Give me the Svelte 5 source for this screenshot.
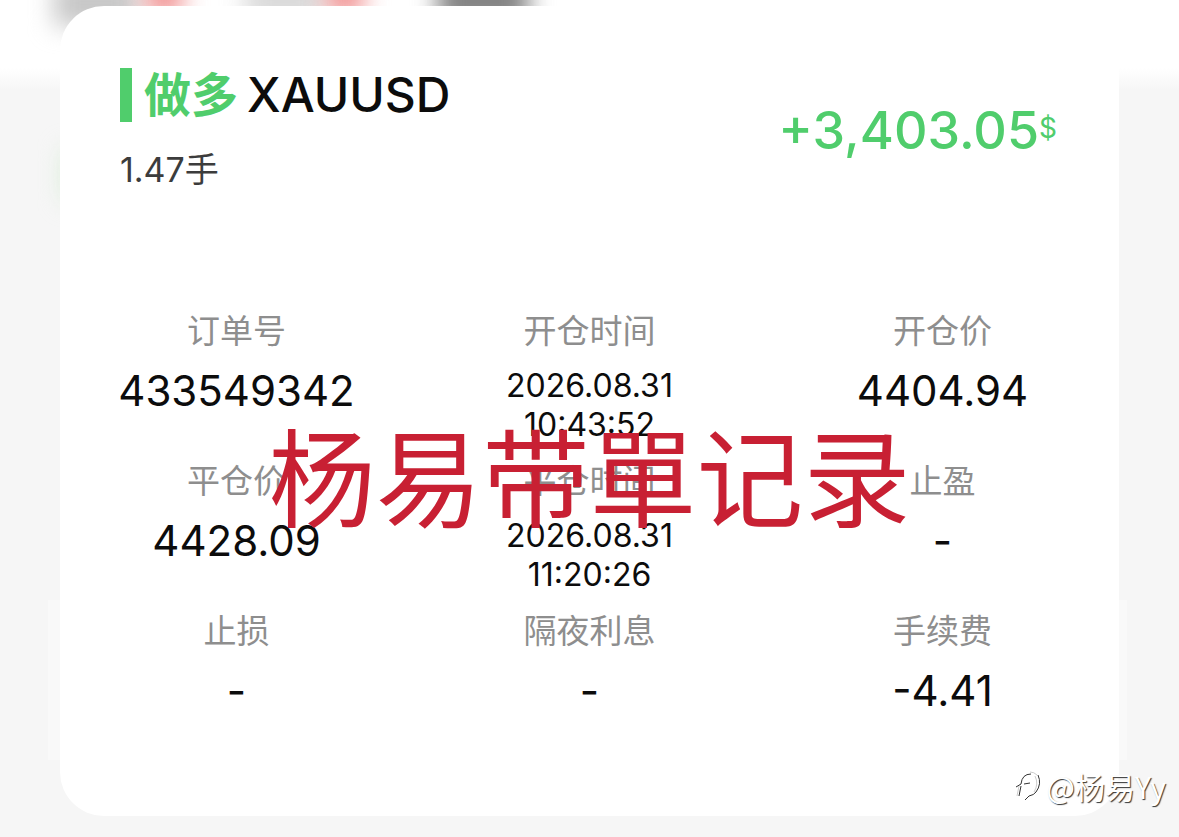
<script>
  const order = {
    side: '做多',
    symbol: 'XAUUSD',
    lots: '1.47手',
    profit: '+3,403.05',
    currency: '$'
  };

  const fields = [
    { label: '订单号', value: ['433549342'] },
    { label: '开仓时间', value: ['2026.08.31', '10:43:52'] },
    { label: '开仓价', value: ['4404.94'] },
    { label: '平仓价', value: ['4428.09'] },
    { label: '平仓时间', value: ['2026.08.31', '11:20:26'] },
    { label: '止盈', value: ['-'] },
    { label: '止损', value: ['-'] },
    { label: '隔夜利息', value: ['-'] },
    { label: '手续费', value: ['-4.41'] }
  ];
</script>

<main class="page">
  <div class="backdrop" aria-hidden="true">
    <span class="smudge grey-one"></span>
    <span class="smudge grey-two"></span>
    <span class="smudge red-one"></span>
    <span class="smudge red-two"></span>
    <span class="smudge dark"></span>
    <span class="smudge green"></span>
    <span class="strip"></span>
  </div>

  <article class="card">
    <header class="card-header">
      <div>
        <h1 class="title">
          <span class="side">{order.side}</span>
          <span class="symbol">{order.symbol}</span>
        </h1>
        <p class="lots">{order.lots}</p>
      </div>
      <p class="profit">{order.profit}<span class="currency">{order.currency}</span></p>
    </header>

    <dl class="fields">
      {#each fields as field}
        <div class="field">
          <dt>{field.label}</dt>
          <dd class:time={field.value.length > 1}>
            {#each field.value as line}
              <span class="line">{line}</span>
            {/each}
          </dd>
        </div>
      {/each}
    </dl>

    <p class="banner">杨易带單记录</p>
  </article>

  <p class="author">
    <svg viewBox="0 0 26 32" aria-hidden="true">
      <path class="icon-light" d="M1 26 L3 16 M14 2 Q18 2 21 5 M19 6 Q23 14 18 22" />
      <path d="M3 26 L5 16 M0 17 L5 14 Q6 4 15 4 M8 14 L14 13 M22 5 Q26 14 20 22 Q18 25 13 26 L9 30" />
    </svg>
    <span>@杨易Yy</span>
  </p>
</main>

<style>
  :global(body) {
    margin: 0;
    background: #f6f6f6;
    font-family: Inter, "Noto Sans CJK SC", sans-serif;
    color: #0c0c0c;
  }

  .page {
    position: relative;
    padding: 6px 60px 21px;
    overflow: hidden;
  }

  .backdrop {
    position: absolute;
    inset: 0;
    background: linear-gradient(#fff 68px, #f6f6f6 90px);
  }

  .smudge {
    position: absolute;
    filter: blur(12px);
  }

  .grey-one {
    left: 54px;
    top: -20px;
    width: 84px;
    height: 46px;
    background: #c6c6c6;
  }

  .grey-two {
    left: 245px;
    top: -20px;
    width: 80px;
    height: 40px;
    background: #d8d8d8;
  }

  .red-one,
  .red-two {
    left: 146px;
    top: -20px;
    width: 36px;
    height: 34px;
    background: #f08a8a;
  }

  .red-two {
    left: 327px;
  }

  .dark {
    left: 438px;
    top: -20px;
    width: 90px;
    height: 42px;
    background: #7c7c7c;
  }

  .green {
    left: 64px;
    top: 150px;
    width: 20px;
    height: 50px;
    background: #d4ecd2;
  }

  .strip {
    position: absolute;
    left: 48px;
    right: 52px;
    top: 600px;
    height: 160px;
    background: #f9f9f9;
  }

  .card {
    position: relative;
    padding-bottom: 60px;
    border-radius: 44px;
    background: #fff;
  }

  .card-header {
    display: flex;
    justify-content: space-between;
    padding: 62px 60px 0;
  }

  .title {
    display: flex;
    align-items: center;
    gap: 9px;
    margin: 0;
    border-left: 12px solid #50cd6c;
    padding-left: 12px;
    font-size: 48px;
    line-height: 54px;
    font-weight: 500;
  }

  .side {
    color: #50cd6c;
    font-size: 47px;
    font-weight: 700;
  }

  .lots {
    margin: 24px 0 0;
    font-size: 34px;
    line-height: 48px;
    color: #3c3c3c;
  }

  .profit {
    display: flex;
    margin: 32px 2px 0 0;
    color: #50cd6c;
    font-size: 52px;
    line-height: 62px;
    font-weight: 500;
  }

  .currency {
    font-size: 28px;
    line-height: 56px;
    font-weight: 400;
  }

  .fields {
    display: grid;
    grid-template-columns: repeat(3, 1fr);
    grid-auto-rows: 150px;
    margin: 112px 0 0;
    text-align: center;
  }

  .field dt {
    color: #8e8e8e;
    font-size: 33px;
    line-height: 50px;
  }

  .field dd {
    margin: 10px 0 0;
    font-size: 42px;
    line-height: 50px;
  }

  .field .time {
    font-size: 32px;
    line-height: 39px;
  }

  .line {
    display: block;
  }

  .banner {
    position: absolute;
    left: 0;
    right: 0;
    top: 394px;
    margin: 0;
    color: #c82033;
    font-size: 107px;
    line-height: 160px;
    font-weight: 400;
    text-align: center;
    white-space: nowrap;
  }

  .author {
    position: absolute;
    right: 13px;
    bottom: 31px;
    display: flex;
    align-items: center;
    gap: 5px;
    margin: 0;
    color: #fff;
    font-family: "Noto Sans CJK SC", sans-serif;
    font-size: 30px;
    line-height: 40px;
    text-shadow: 1px 1px 1px #333;
  }

  .author svg {
    width: 26px;
    height: 32px;
    fill: none;
    stroke: #333;
    stroke-width: 1;
  }

  .author .icon-light {
    stroke: #ccc;
  }
</style>
